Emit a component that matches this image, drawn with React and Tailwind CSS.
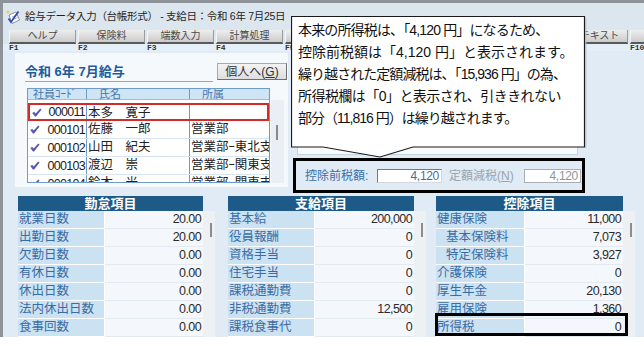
import React from "react";

const FONT = "font-['Liberation_Sans','Noto_Sans_CJK_JP',sans-serif]";

function TitleIcon() {
  return (
    <svg width="16" height="16" viewBox="0 0 16 16" className="shrink-0">
      <polygon points="4,6 11,3 14.5,11 7,14.5" fill="#ffffff" stroke="#7a7a7a" strokeWidth="0.8" />
      <path d="M7 8 L11.5 6 M8 10.5 L12.5 8.5" stroke="#7f9fd0" strokeWidth="0.8" />
      <path d="M3.5 9.5 L6 13 L13.5 2.5" stroke="#3349b8" strokeWidth="1.7" fill="none" />
      <path d="M3 0.8 L3.6 2.6 L5.4 3 L3.6 3.5 L3 5.3 L2.4 3.5 L0.6 3 L2.4 2.6 Z" fill="#f2c81a" />
    </svg>
  );
}

function Check() {
  return (
    <svg width="10" height="9" viewBox="0 0 10 9" className="shrink-0">
      <defs>
        <linearGradient id="ck" x1="0" y1="0" x2="1" y2="1">
          <stop offset="0" stopColor="#7b78d8" />
          <stop offset="1" stopColor="#3a3894" />
        </linearGradient>
      </defs>
      <path d="M0.2 5 L2.2 3.8 L3.7 5.4 L8.2 0.4 L9.6 1.4 L4 8.6 L3 8.6 Z" fill="url(#ck)" />
    </svg>
  );
}

const buttons = ["ヘルプ", "保険料", "端数入力", "計算処理", "明細書", "一覧表", "印刷", "ＣＳＶ", "テキスト", "終了"];

const listRows = [
  ["000011", "本多　寛子", ""],
  ["000101", "佐藤　一郎", "営業部"],
  ["000102", "山田　紀夫", "営業部ｰ東北支店"],
  ["000103", "渡辺　崇", "営業部ｰ関東支店"],
  ["000104", "鈴木　光", "営業部ｰ関東支店"],
];

const tables = [
  {
    title: "勤怠項目",
    w: "w-[185px]",
    lw: "w-[87px]",
    ml: "ml-[15px]",
    rows: [
      ["就業日数", "20.00"],
      ["出勤日数", "20.00"],
      ["欠勤日数", "0.00"],
      ["有休日数", "0.00"],
      ["休出日数", "0.00"],
      ["法内休出日数", "0.00"],
      ["食事回数", "0.00"],
    ],
  },
  {
    title: "支給項目",
    w: "w-[186px]",
    lw: "w-[87px]",
    ml: "ml-[13px]",
    rows: [
      ["基本給", "200,000"],
      ["役員報酬", "0"],
      ["資格手当", "0"],
      ["住宅手当", "0"],
      ["課税通勤費", "0"],
      ["非税通勤費", "12,500"],
      ["課税食事代", "0"],
    ],
  },
  {
    title: "控除項目",
    w: "w-[187px]",
    lw: "w-[89px]",
    ml: "ml-[10px]",
    rows: [
      ["健康保険", "11,000"],
      ["基本保険料", "7,073", true],
      ["特定保険料", "3,927", true],
      ["介護保険", "0"],
      ["厚生年金", "20,130"],
      ["雇用保険", "1,360"],
      ["所得税", "0"],
    ],
  },
];

const tipLines = [
  ["本来の所得税は、「4,120 円」になるため、", "tracking-[-0.85px]"],
  ["控除前税額は「4,120 円」と表示されます。", "tracking-[0px]"],
  ["繰り越された定額減税は、「15,936 円」の為、", "tracking-[-0.95px]"],
  ["所得税欄は「0」と表示され、引ききれない", "tracking-[-0.55px]"],
  ["部分（11,816 円）は繰り越されます。", "tracking-[-1px]"],
];

function DataTable({ t }) {
  return (
    <div className={`flex ${t.ml}`}>
      <div className={`${t.w} flex flex-col`}>
        <div className="h-[15px] bg-[#1d5a87] text-white text-[13px] font-bold leading-[15px] text-center">
          {t.title}
        </div>
        {t.rows.map((r, i) => (
          <div key={i} className="h-[18px] flex">
            <div
              className={`${t.lw} shrink-0 h-full bg-[#cbe2f3] border-b border-r border-white text-[12.5px] text-[#3a6ca3] leading-[17px] whitespace-nowrap overflow-hidden ${
                r[2] ? "pl-[10px]" : "pl-[1px]"
              }`}
            >
              {r[0]}
            </div>
            <div className="flex-1 h-full bg-[#f4f8fc] border-b border-[#e2eaf1] text-[12.5px] tracking-[-0.6px] text-[#2a2a2a] leading-[17px] text-right pr-[2px]">
              {r[1]}
            </div>
          </div>
        ))}
      </div>
      <div className="w-[12px] flex flex-col">
        <div className="h-[15px]" />
        <div className="flex-1 bg-[#edf1f4] pt-[12px] pl-[7px]">
          <div className="w-[2px] h-[14px] bg-[#8c8c8c]" />
        </div>
      </div>
    </div>
  );
}

export default function App() {
  return (
    <div className={`relative w-[644px] h-[346px] bg-white overflow-hidden ${FONT}`}>
      <div className="flex flex-col w-[644px] h-[337px] border-t-[3px] border-l-[3px] border-[#8d9399] bg-[#e0ebf5]">
        {/* title bar */}
        <div className="h-[27px] shrink-0 flex items-center bg-[#dce6ef] pl-[2px] gap-[4px]">
          <TitleIcon />
          <span className="text-[10.5px] text-[#1e1e1e] whitespace-nowrap tracking-[-0.3px]">
            給与データ入力（台帳形式） - 支給日：令和 6年 7月25日
          </span>
        </div>
        {/* function buttons */}
        <div className="h-[14px] shrink-0 flex gap-[2px] pl-[6px] bg-[#dce6ef] overflow-hidden">
          {buttons.map((b, i) => (
            <div
              key={i}
              className={`w-[67px] shrink-0 h-full bg-gradient-to-b from-[#eeeeee] to-[#cbcbcb] border-b-2 border-b-[#595959] border-r border-r-[#9a9a9a] border-l border-l-[#f4f4f4] text-[10px] text-[#4a4a4a] leading-none flex items-center justify-center whitespace-nowrap ${
                i === 8 ? "pl-[10px]" : ""
              }`}
            >
              {b}
            </div>
          ))}
        </div>
        {/* F labels */}
        <div className="h-[7px] shrink-0 flex gap-[2px] pl-[6px] bg-[#e5eff7] overflow-hidden">
          {buttons.map((b, i) => (
            <div
              key={i}
              className="w-[67px] shrink-0 text-[8px] font-bold leading-[7px] text-[#333] font-['Liberation_Mono',monospace]"
            >
              F{i + 1}
            </div>
          ))}
        </div>

        {/* top section */}
        <div className="h-[143px] shrink-0 flex">
          {/* left panel */}
          <div className="ml-[12px] mt-[2px] w-[273px] h-[134px] bg-[#f5f9fc] flex flex-col">
            <div className="flex items-start pt-[9px]">
              <div className="ml-[10px] w-[188px] h-[20px] border-b border-[#9aa6b1] flex items-center text-[13px] font-bold text-[#1d5c9c] whitespace-nowrap">
                令和 6年 7月給与
              </div>
              <div className="ml-[4px] mt-[1px] w-[70px] h-[17px] bg-gradient-to-b from-[#f3f3f3] to-[#dedede] border border-[#a9a9a9] border-r-[#6f6f6f] border-b-[#6f6f6f] flex items-center justify-center text-[12px] text-[#333] whitespace-nowrap">
                個人へ(<span className="underline">G</span>)
              </div>
            </div>
            <div className="flex mt-[6px] ml-[12px]">
              <div className="w-[243px] h-[95px] border border-[#6f9cc6] bg-white overflow-hidden flex flex-col">
                <div className="h-[11px] shrink-0 flex bg-[#cfe4f4] text-[11px] leading-[11px] text-[#4676ab] border-b border-[#9dbfdc]">
                  <div className="w-[59px] shrink-0 border-r border-[#6f9cc6] pl-[5px] whitespace-nowrap">社員ｺｰﾄﾞ</div>
                  <div className="w-[103px] shrink-0 border-r border-[#6f9cc6] pl-[12px]">氏名</div>
                  <div className="flex-1 pl-[12px]">所属</div>
                </div>
                {listRows.map((r, i) => {
                  const row = (
                    <div
                      className={`h-[18px] shrink-0 flex text-[12.5px] text-[#222] leading-[16px] ${
                        i === 0 ? "border-2 border-[#d42a2a]" : "border-b border-[#d8e5f0]"
                      }`}
                    >
                      <div className={`${i === 0 ? "w-[57px]" : "w-[59px]"} shrink-0 border-r border-[#6f9cc6] flex items-center pl-[2px]`}>
                        <Check />
                        <span className="ml-auto pr-[1px] tracking-[-0.7px]">{r[0]}</span>
                      </div>
                      <div className="w-[103px] shrink-0 border-r border-[#6f9cc6] pl-[1px] whitespace-nowrap overflow-hidden">
                        {r[1]}
                      </div>
                      <div className="flex-1 pl-[1px] whitespace-nowrap overflow-hidden">{r[2]}</div>
                    </div>
                  );
                  if (i === 0)
                    return (
                      <div key={i} className="h-[21px] shrink-0 pt-[3px] flex flex-col">
                        {row}
                      </div>
                    );
                  return <React.Fragment key={i}>{row}</React.Fragment>;
                })}
              </div>
              <div className="mt-[12px] ml-[1px] w-[13px] h-[83px] bg-[#e9eff4] pt-[25px] pl-[5px]">
                <div className="w-[2px] h-[15px] bg-[#8a8a8a]" />
              </div>
            </div>
          </div>

          {/* right column */}
          <div className="ml-[5px] flex flex-col">
            <div className="ml-[4px] mt-[2px] w-[281px] h-[102px] bg-[#f8fbfd] border border-[#c7d3dd]" />
            <div className="mt-[3px] w-[292px] h-[35px] border-[3px] border-black flex items-center pl-[9px] text-[12px]">
              <span className="w-[72px] shrink-0 text-[#3c6fa6] whitespace-nowrap">控除前税額:</span>
              <div className="w-[65px] h-[14px] shrink-0 bg-white border border-[#6f7a84] border-r-[#d3d8dd] border-b-[#d3d8dd] text-right pr-[2px] leading-[12px] text-[#4b6d96] tracking-[-0.3px]">
                4,120
              </div>
              <span className="ml-[7px] w-[75px] shrink-0 text-[#9aa3ab] whitespace-nowrap">
                定額減税(<span className="underline">N</span>)
              </span>
              <div className="w-[57px] h-[14px] shrink-0 bg-white border border-[#a9afb5] text-right pr-[2px] leading-[12px] text-[#8e959c] tracking-[-0.3px]">
                4,120
              </div>
            </div>
          </div>
        </div>

        {/* bottom tables */}
        <div className="mt-[2px] h-[141px] shrink-0 flex">
          {tables.map((t, i) => (
            <DataTable key={i} t={t} />
          ))}
        </div>
      </div>

      {/* highlight around 所得税 */}
      <div className="absolute left-[435px] top-[313px] w-[193px] h-[23px] border-[3px] border-black" />

      {/* callout tooltip */}
      <div className="absolute left-[291px] top-[16px] w-[296px] h-[143px]">
        <svg width="296" height="143" viewBox="0 0 296 143" className="absolute left-0 top-0">
          <path
            d="M0.5 0.5 H293.5 V131 H122 L89 141 L32 131 H0.5 Z"
            fill="#ffffff"
            stroke="#1a1a1a"
            strokeWidth="1.2"
          />
          <path d="M294.8 1.5 V132" stroke="#b9c2ca" strokeWidth="1.2" />
        </svg>
        <div className="absolute left-[7px] top-[3px] flex flex-col text-[14px] leading-[22px] text-[#111]">
          {tipLines.map((l, i) => (
            <div key={i} className={`whitespace-nowrap ${l[1]}`}>
              {l[0]}
            </div>
          ))}
        </div>
      </div>
    </div>
  );
}
